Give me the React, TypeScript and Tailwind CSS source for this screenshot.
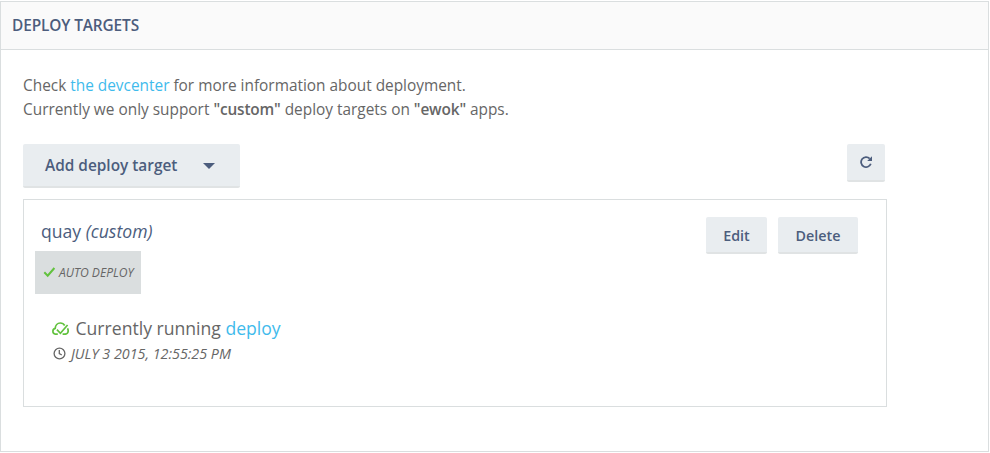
import React from "react";

const button =
  "flex items-center justify-center rounded-[2px] border-b-2 border-[#e0e3e4] bg-[#e9edf0] font-semibold text-[#4c5d7d]";

function CloudCheck() {
  return (
    <svg width="17" height="14" viewBox="0 0 17 14" fill="none" stroke="#62c23e" strokeWidth="1.7">
      <path d="M5.800 13.200H4.100C2.200 13.200.9 12 .9 10.300c0-1.500 1-2.600 2.300-2.900C3.400 4.300 5.500 2 8.200 2c2 0 3.700 1 4.500 2.500" />
      <path d="M4.900 8.700l3.500 3.600 7.200-8.300" />
      <path d="M15.400 7.400c.5.600.8 1.500.8 2.500 0 1.800-1.300 3.300-3 3.300h-2.600" />
    </svg>
  );
}

function Clock() {
  return (
    <svg width="13" height="13" viewBox="0 0 13 13" fill="none" stroke="#666" strokeWidth="1.3">
      <circle cx="6.500" cy="6.500" r="5.400" />
      <path d="M6.300 3v3.700l2.500 1.300" />
    </svg>
  );
}

function Refresh() {
  return (
    <svg width="12" height="12" viewBox="0 0 12 12">
      <path d="M10.800 7.800A5 5 0 1 1 9.700 2.600" fill="none" stroke="#4c5d7d" strokeWidth="1.800" />
      <path d="M12 .3v4.800H7.200z" fill="#4c5d7d" />
    </svg>
  );
}

export default function App() {
  return (
    <div className="h-[453px] w-[990px] bg-white pt-px font-['Open_Sans',sans-serif] text-[#666]">
      <section className="h-[451px] w-[989px] border border-[#dadedf]">
        <header className="flex h-12 items-center border-b border-[#dadedf] bg-[#fafafa] pl-[11px]">
          <h1 className="whitespace-nowrap text-[15.4px] font-semibold tracking-[-0.11px] text-[#4c5d7d]">DEPLOY TARGETS</h1>
        </header>
        <div className="pl-[22px] pt-6">
          <p className="whitespace-nowrap text-[15.4px] leading-6">
            Check <a className="text-[#3fbbec]">the devcenter</a> for more information about deployment.
            <br />
            Currently we only support <b className="font-semibold tracking-[-0.15px]">"custom"</b> deploy targets on{" "}
            <b className="font-semibold tracking-[-0.15px]">"ewok"</b> apps.
          </p>
          <div className="mt-[22px] flex w-[862px] items-start justify-between">
            <button className={`${button} h-11 w-[217px] justify-start gap-[26px] whitespace-nowrap pl-[22px] pt-0.5 text-[15.4px]`}>
              Add deploy target
              <svg width="12" height="6" viewBox="0 0 12 6" fill="#4c5d7d">
                <path d="M0 0h12L6 6z" />
              </svg>
            </button>
            <button aria-label="Refresh" className={`${button} h-[38px] w-[38px]`}>
              <Refresh />
            </button>
          </div>
          <article className="mt-[11px] h-[208px] w-[864px] border border-[#dadedf]">
            <div className="flex items-start justify-between pl-[17px] pr-7 pt-[17px]">
              <h2 className="whitespace-nowrap text-[17.6px] leading-7 text-[#4c5d7d]">
                quay <i>(custom)</i>
              </h2>
              <div className="flex gap-[11px] text-[14.3px]">
                <button className={`${button} h-[37px] w-[61px] pt-0.5`}>Edit</button>
                <button className={`${button} h-[37px] w-20 pt-0.5`}>Delete</button>
              </div>
            </div>
            <div className="-mt-[3px] ml-[11px] flex h-[43px] w-[106px] items-center gap-[3px] whitespace-nowrap bg-[#dadedf] pl-2 text-[12.1px] italic">
              <svg width="13" height="11" viewBox="0 0 13 11" fill="none" stroke="#62c23e" strokeWidth="2">
                <path d="M1.300 5.300l3.400 3.400 6.700-7.700" />
              </svg>
              <span className="pt-0.5">AUTO DEPLOY</span>
            </div>
            <div className="ml-[28px] mt-[20px]">
              <div className="flex h-7 items-center gap-[6.5px] whitespace-nowrap text-[17.6px]">
                <CloudCheck />
                <span>
                  Currently running <a className="text-[#3fbbec]">deploy</a>
                </span>
              </div>
              <div className="flex h-[22px] items-center gap-[5px] whitespace-nowrap pl-px text-[14.3px] italic">
                <Clock />
                <span className="pt-0.5">JULY 3 2015, 12:55:25 PM</span>
              </div>
            </div>
          </article>
        </div>
      </section>
    </div>
  );
}
